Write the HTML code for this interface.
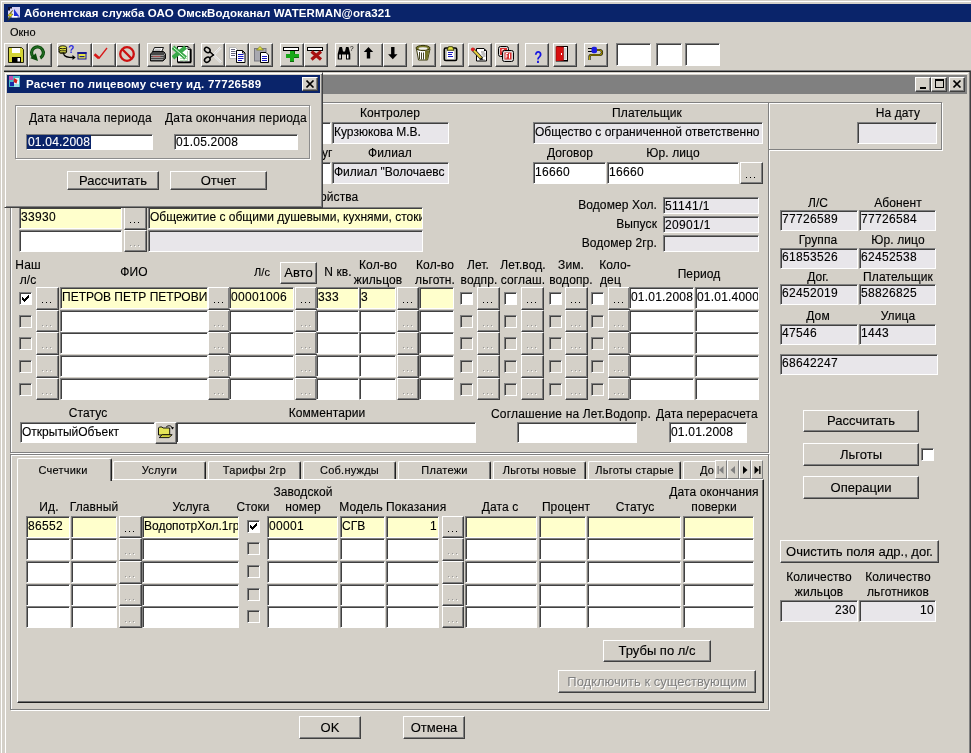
<!DOCTYPE html>
<html><head><meta charset="utf-8"><title>UI</title>
<style>
html,body{margin:0;padding:0}
html{overflow:hidden;width:971px;height:753px;background:#d4d0c8}
body{will-change:transform;width:971px;height:753px;overflow:hidden;background:#d4d0c8;position:relative;font-family:"Liberation Sans",sans-serif;font-size:12px;color:#000;-webkit-text-stroke:0.12px currentColor}
div,i,span{box-sizing:border-box}
.f{position:absolute;border:1px solid;border-color:#808080 #fff #fff #808080;box-shadow:inset 1px 1px 0 #404040;padding:2px 0 0 1px;line-height:14px;white-space:nowrap;overflow:hidden;font-size:12px}
.b{position:absolute;background:#d4d0c8;border:1px solid;border-color:#fff #404040 #404040 #fff;box-shadow:inset -1px -1px 0 #808080;text-align:center;white-space:nowrap;overflow:hidden;font-size:13px}
.b.dis{color:#808080;text-shadow:1px 1px 0 #fff;-webkit-text-stroke:0}
.d{position:absolute;width:1px;height:1px;top:13px}
.l{position:absolute;white-space:nowrap;line-height:16px;height:16px;font-size:12px;letter-spacing:0.1px}
.l.ls{letter-spacing:0.17px}
.c{position:absolute;border:1px solid;border-color:#808080 #fff #fff #808080;box-shadow:inset 1px 1px 0 #404040}
.abs{position:absolute}

.l.s11{font-size:11px}

</style></head>
<body>
<div style="position:absolute;left:0px;top:0px;width:971px;height:1px;background:#d4d0c8"></div>
<div style="position:absolute;left:0px;top:1px;width:971px;height:1px;background:#fff"></div>
<div style="position:absolute;left:0px;top:0px;width:1px;height:753px;background:#d4d0c8"></div>
<div style="position:absolute;left:1px;top:1px;width:1px;height:752px;background:#fff"></div>
<div class="abs" style="left:4px;top:4px;width:967px;height:18px;background:#0a246a"></div>
<div class="abs" style="left:24px;top:4px;height:18px;line-height:18px;color:#fff;-webkit-text-stroke:0;font-weight:bold;font-size:11.5px;white-space:nowrap;letter-spacing:0.12px" id="ttl">Абонентская служба ОАО ОмскВодоканал WATERMAN@ora321</div>
<svg class="abs" style="left:6px;top:5px" width="16" height="16" viewBox="6 5 16 16"><rect x="8" y="7" width="12" height="10.500" fill="#d6d0f2"/><path d="M8 7h4v1.500h-2v2h-2z" fill="#101030"/><path d="M14 9l5.500 7.500h-5.500z" fill="#2030d8"/><path d="M12.800 12.500v4.300h4.700" stroke="#fff" stroke-width="1.600" fill="none"/><path d="M12.300 10.500l-4.800 5.500h2.600l-2.300 4.500 5.200-6.500h-2.600l2.200-3.500z" fill="#f2e61e" stroke="#3a3a00" stroke-width=".5"/></svg>
<div class="abs" style="left:10px;top:25px;font-size:11px;line-height:14px" id="menu">Окно</div>
<div class="b" style="left:4px;top:43px;width:24px;height:24px"><svg class="abs" style="left:0;top:0" width="22" height="22" viewBox="5 44 22 22"><path d="M8.5 47.5h13l2 2v13h-15z" fill="#d4d436" stroke="#101000" stroke-width=".9"/><rect x="12" y="48" width="8" height="5" fill="#fff"/><rect x="12" y="57" width="9" height="5.500" fill="#000"/><rect x="17.500" y="58" width="2.500" height="3.500" fill="#fff"/></svg></div>
<div class="b" style="left:28px;top:43px;width:24px;height:24px"><svg class="abs" style="left:0;top:0" width="22" height="22" viewBox="29 44 22 22"><path d="M40.300 58 A5.900 5.900 0 1 0 33.200 56.900" stroke="#0c4c0c" stroke-width="3.200" fill="none"/><path d="M40.300 58 A5.900 5.900 0 1 0 33.200 56.900" stroke="#2a7a2a" stroke-width="1" fill="none"/><path d="M30.300 58.200L38 61L35.800 53.300Z" fill="#0c4c0c"/></svg></div>
<div class="b" style="left:57px;top:43px;width:35px;height:24px"><svg class="abs" style="left:0;top:0" width="33" height="22" viewBox="58 44 33 22"><path d="M59 47.500v4.500c0 1 1.700 1.600 3.800 1.600s3.800-.6 3.800-1.600v-4.500" fill="#e6e646" stroke="#000" stroke-width=".9"/><ellipse cx="62.800" cy="47.300" rx="3.800" ry="1.500" fill="#e6e646" stroke="#000" stroke-width=".9"/><path d="M59 49.300c0 1 1.700 1.500 3.800 1.500s3.800-.5 3.800-1.500M59 51c0 1 1.700 1.500 3.800 1.500s3.800-.5 3.800-1.500" fill="none" stroke="#000" stroke-width=".8"/><path d="M63.500 53.500c.5 3.500 4 4 10 4" stroke="#000" stroke-width="1.300" fill="none"/><path d="M72.500 55l3.200 2.500-3.200 2.500z" fill="#000"/><text x="68.300" y="53.300" font-family="Liberation Sans" font-weight="bold" font-size="10" fill="#2a2ae0">?</text><rect x="78" y="52.500" width="8" height="6.500" fill="#e6e646" stroke="#1a1a90" stroke-width="1"/><rect x="77.500" y="52" width="9" height="2" fill="#1a1a90"/><rect x="79.500" y="56" width="5" height="1.200" fill="#1a1a90"/></svg></div>
<div class="b" style="left:92px;top:43px;width:24px;height:24px"><svg class="abs" style="left:0;top:0" width="22" height="22" viewBox="93 44 22 22"><path d="M94.500 54.200L99 58.300" stroke="#d81818" stroke-width="2.600" fill="none"/><path d="M98.800 58.500L107 48" stroke="#d81818" stroke-width="1.300" fill="none"/></svg></div>
<div class="b" style="left:116px;top:43px;width:24px;height:24px"><svg class="abs" style="left:0;top:0" width="22" height="22" viewBox="117 44 22 22"><circle cx="127" cy="54" r="6.800" stroke="#cc1010" stroke-width="2.300" fill="none"/><path d="M122.300 49.300l9.400 9.400" stroke="#cc1010" stroke-width="2.300"/></svg></div>
<div class="b" style="left:147px;top:43px;width:24px;height:24px"><svg class="abs" style="left:0;top:0" width="22" height="22" viewBox="148 44 22 22"><path d="M154.500 47.500h9l-2 4.500h-9z" fill="#fff" stroke="#000" stroke-width=".9"/><path d="M155 49.200h6M154.300 50.600h6" stroke="#909090" stroke-width=".7"/><path d="M150.500 54l2.500-2.500h10.500l2 2v5l-2.500 2.500h-12.500z" fill="#484848" stroke="#000" stroke-width=".9"/><path d="M151 55.500h12.500M151 57.500h12.500M151 59.500h12" stroke="#b0b0b0" stroke-width=".8"/><path d="M163.500 55.500l2-2" stroke="#b0b0b0" stroke-width=".8"/><path d="M152.500 56.500h8" stroke="#c05050" stroke-width=".8"/></svg></div>
<div class="b" style="left:171px;top:43px;width:24px;height:24px"><svg class="abs" style="left:0;top:0" width="22" height="22" viewBox="172 44 22 22"><path d="M177.500 46.500h10.500l3 3v12.500h-13.500z" fill="#fff" stroke="#000" stroke-width="1"/><path d="M190.500 49.500v13h-13" stroke="#000" stroke-width="1.600" fill="none"/><path d="M188 46.500v3h3" stroke="#000" stroke-width=".9" fill="none"/><path d="M180 58.500h8M180 60.500h8M184 57v4.500M187.500 51v9" stroke="#b8dcb8" stroke-width="1"/><path d="M174.500 48.500l9.500 8M184 48.500l-9.500 8" stroke="#38a848" stroke-width="4.200" stroke-linecap="square"/><path d="M173.500 47.500l11.500 10" stroke="#e8ffe8" stroke-width="1"/></svg></div>
<div class="b" style="left:201px;top:43px;width:24px;height:24px"><svg class="abs" style="left:0;top:0" width="22" height="22" viewBox="202 44 22 22"><path d="M213 55.500L221 47.300" stroke="#fff" stroke-width="2"/><path d="M213 54.500L221 62.300" stroke="#fff" stroke-width="2"/><path d="M213.500 55L221.300 47" stroke="#909090" stroke-width=".6"/><path d="M213.500 55L221 62.500" stroke="#909090" stroke-width=".6"/><path d="M209.500 51.500L214 55.500M209.500 58L214 54.500" stroke="#000" stroke-width="1.500"/><ellipse cx="207.300" cy="50" rx="3" ry="2.300" fill="none" stroke="#000" stroke-width="1.500" transform="rotate(35 207.300 50)"/><ellipse cx="207.300" cy="59.700" rx="3" ry="2.300" fill="none" stroke="#000" stroke-width="1.500" transform="rotate(-35 207.300 59.700)"/></svg></div>
<div class="b" style="left:225px;top:43px;width:24px;height:24px"><svg class="abs" style="left:0;top:0" width="22" height="22" viewBox="226 44 22 22"><path d="M229.500 47.500h6l2.500 2.500v8.500h-8.500z" fill="#fff" stroke="#a8a8a8" stroke-width=".8"/><path d="M231 49.500h4M231 51.500h4.500M231 53.500h4.500M231 55.500h4" stroke="#606078" stroke-width="1"/><path d="M236.500 50.500h6l2.500 2.500v9.500h-8.500z" fill="#fff" stroke="#000" stroke-width="1"/><path d="M242.500 50.500v2.500h2.500" fill="none" stroke="#000" stroke-width=".9"/><path d="M238 54.500h5.500M238 56.500h5.500M238 58.500h5.500M238 60.500h4" stroke="#1818c0" stroke-width="1"/></svg></div>
<div class="b" style="left:249px;top:43px;width:24px;height:24px"><svg class="abs" style="left:0;top:0" width="22" height="22" viewBox="250 44 22 22"><rect x="254.500" y="48.500" width="11.500" height="12.500" fill="#a8a8b0" stroke="#787880" stroke-width="1"/><path d="M256.500 50l3.500-3.500 3.500 3.500z" fill="#e6e646" stroke="#787820" stroke-width=".8"/><path d="M260.500 52.500h5.500l2.500 2.500v7.500h-8z" fill="#fff" stroke="#000" stroke-width="1"/><path d="M262 56.500h5M262 58.500h5M262 60.500h5" stroke="#1818c0" stroke-width="1"/></svg></div>
<div class="b" style="left:280px;top:43px;width:24px;height:24px"><svg class="abs" style="left:0;top:0" width="22" height="22" viewBox="281 44 22 22" shape-rendering="crispEdges"><rect x="283.500" y="47.500" width="15" height="3" fill="#fff" stroke="#000" stroke-width="1"/><path d="M290 50.500h4v3.500h4.500v3.800h-4.500v3.200h-4v-3.200h-4.500v-3.800h4.500z" fill="#18a818"/><path d="M294 57.800h4.500M290 61h4M294 54v-3.500" stroke="#0c6c0c" stroke-width="1" fill="none"/></svg></div>
<div class="b" style="left:304px;top:43px;width:24px;height:24px"><svg class="abs" style="left:0;top:0" width="22" height="22" viewBox="305 44 22 22"><rect x="307.500" y="47.500" width="15" height="3" fill="#fff" stroke="#000" stroke-width="1" shape-rendering="crispEdges"/><path d="M311.500 51.500l9.500 8M321 51.500l-9.500 8" stroke="#a81010" stroke-width="3.200"/></svg></div>
<div class="b" style="left:335px;top:43px;width:24px;height:24px"><svg class="abs" style="left:0;top:0" width="22" height="22" viewBox="336 44 22 22"><path d="M339.500 47h2.500l1 4.500h2l1-4.500h2.500l1.800 7v5.500h-4.300v-5h-4v5h-4.300v-5.500z" fill="#000"/><rect x="339.300" y="54.500" width="1.500" height="4" fill="#fff"/><rect x="347" y="54.500" width="1.500" height="4" fill="#fff"/><text x="350" y="50.500" font-family="Liberation Sans" font-size="6.500" fill="#000">?</text></svg></div>
<div class="b" style="left:359px;top:43px;width:24px;height:24px"><svg class="abs" style="left:0;top:0" width="22" height="22" viewBox="360 44 22 22"><path d="M368.500 47l4.700 5h-3v6.500h-3.400V52h-3z" fill="#000"/></svg></div>
<div class="b" style="left:383px;top:43px;width:24px;height:24px"><svg class="abs" style="left:0;top:0" width="22" height="22" viewBox="384 44 22 22"><path d="M392.800 59.200l4.700-5h-3V47h-3.400v7.200h-3z" fill="#000"/></svg></div>
<div class="b" style="left:412px;top:43px;width:24px;height:24px"><svg class="abs" style="left:0;top:0" width="22" height="22" viewBox="413 44 22 22"><path d="M416.500 49l2 11h9l2.500-11z" fill="#fff" stroke="#38380c" stroke-width="1"/><path d="M425 51v9h2.500l2-10z" fill="#74742a"/><ellipse cx="423" cy="48" rx="7" ry="2.600" fill="#7c7c2c" stroke="#38380c" stroke-width="1"/><ellipse cx="423" cy="48.500" rx="4.500" ry="1.300" fill="#f0f0f0"/><path d="M419.500 52v7M421.500 52.500v7M423.500 52.500v7" stroke="#303010" stroke-width=".9"/></svg></div>
<div class="b" style="left:440px;top:43px;width:24px;height:24px"><svg class="abs" style="left:0;top:0" width="22" height="22" viewBox="441 44 22 22"><rect x="444.300" y="48" width="12.400" height="12.500" rx="1.500" fill="#c8c8c0" stroke="#000" stroke-width="1.600"/><rect x="447" y="51" width="7" height="8" fill="#fff"/><path d="M448 52.500h5M448 54.500h4M448 56.500h5" stroke="#1818c0" stroke-width="1"/><path d="M447 50.200l1.500-3.500h4l1.500 3.500z" fill="#e6e646" stroke="#303000" stroke-width=".9"/></svg></div>
<div class="b" style="left:468px;top:43px;width:24px;height:24px"><svg class="abs" style="left:0;top:0" width="22" height="22" viewBox="469 44 22 22"><path d="M476.500 48.500h7.500l2.500 2.500v10h-10z" fill="#fff" stroke="#000" stroke-width="1"/><path d="M484 48.500v2.500h2.500" fill="#000"/><path d="M481 52h3.500M481.500 54h4M482.500 56h3M479 60h6" stroke="#606060" stroke-width=".8"/><path d="M473 49.500l9 9.500" stroke="#202020" stroke-width="3.400"/><path d="M473 49.500l8.500 9" stroke="#e6d040" stroke-width="2"/><circle cx="472.800" cy="49.300" r="1.900" fill="#d82020"/><path d="M481 57.300l2.500 2.700-3.500-.8z" fill="#000"/></svg></div>
<div class="b" style="left:495px;top:43px;width:24px;height:24px"><svg class="abs" style="left:0;top:0" width="22" height="22" viewBox="496 44 22 22"><rect x="498.500" y="46.500" width="10" height="10" rx="2" fill="#d8d8d8" stroke="#000" stroke-width="1"/><rect x="500" y="48" width="7" height="7" fill="#d83030"/><rect x="502.500" y="50.500" width="11" height="11" rx="2" fill="#d8d8d8" stroke="#000" stroke-width="1"/><rect x="504.500" y="52.500" width="7" height="7" fill="#d83030"/><path d="M506 58.500v-5h2M506 56h1.500M509.500 53.500v5" stroke="#fff" stroke-width="1" fill="none"/><path d="M502 51.500v-2h2" stroke="#fff" stroke-width=".8" fill="none"/></svg></div>
<div class="b" style="left:525px;top:43px;width:24px;height:24px"><svg class="abs" style="left:0;top:0" width="22" height="22" viewBox="526 44 22 22"><text x="0" y="0" transform="translate(534.300 63) scale(0.82 1)" font-family="Liberation Sans" font-weight="bold" font-size="16" fill="#1414e0">?</text></svg></div>
<div class="b" style="left:553px;top:43px;width:24px;height:24px"><svg class="abs" style="left:0;top:0" width="22" height="22" viewBox="554 44 22 22"><rect x="557.500" y="46.500" width="10" height="14" fill="#fff" stroke="#000" stroke-width="1"/><rect x="564" y="48" width="2.500" height="11.500" fill="#d0d0d0"/><path d="M556 46.500l7.500.5v13.500l-7.500 1z" fill="#d81010" stroke="#800000" stroke-width=".6"/><rect x="561" y="53" width="1" height="2" fill="#fff"/><path d="M556 61.500h12" stroke="#606060" stroke-width="1"/></svg></div>
<div class="b" style="left:584px;top:43px;width:24px;height:24px"><svg class="abs" style="left:0;top:0" width="22" height="22" viewBox="585 44 22 22"><path d="M588 48.500h4M588 51.500h4" stroke="#000" stroke-width="1.100"/><rect x="591.500" y="46.800" width="5.500" height="6.500" rx="2" fill="#1c1ce0"/><path d="M597 50h2.500a2.500 2.500 0 0 1 0 5h-8.500a1.500 1.500 0 0 0-1.500 1.500v3.500" stroke="#181800" stroke-width="2.200" fill="none"/><path d="M597 50h2.500a2.500 2.500 0 0 1 0 5h-8.500a1.500 1.500 0 0 0-1.500 1.500v3.500" stroke="#c8b000" stroke-width=".9" fill="none"/></svg></div>
<div class="f" style="left:616px;top:43px;width:35px;height:23px;background:#fff"></div>
<div class="f" style="left:656px;top:43px;width:26px;height:23px;background:#fff"></div>
<div class="f" style="left:685px;top:43px;width:35px;height:23px;background:#fff"></div>
<div style="position:absolute;left:4px;top:70px;width:967px;height:1px;background:#808080"></div>
<div style="position:absolute;left:4px;top:71px;width:967px;height:1px;background:#202020"></div>
<div style="position:absolute;left:4px;top:72px;width:965px;height:1px;background:#d4d0c8"></div>
<div style="position:absolute;left:5px;top:73px;width:963px;height:1px;background:#fff"></div>
<div style="position:absolute;left:5px;top:73px;width:1px;height:680px;background:#fff"></div>
<div style="position:absolute;left:970px;top:71px;width:1px;height:682px;background:#404040"></div>
<div style="position:absolute;left:969px;top:72px;width:1px;height:681px;background:#808080"></div>
<div class="abs" style="left:7px;top:75px;width:960px;height:19px;background:#808080"></div>
<div class="b" style="left:915px;top:77px;width:16px;height:15px"><i class="abs" style="left:4px;top:9px;width:6px;height:2px;background:#000"></i></div>
<div class="b" style="left:931px;top:77px;width:16px;height:15px"><i class="abs" style="left:3px;top:1px;width:9px;height:9px;border:1px solid #000;border-top:2px solid #000"></i></div>
<div class="b" style="left:949px;top:77px;width:16px;height:15px"><svg class="abs" style="left:3px;top:2px" width="9" height="8" viewBox="0 0 9 8"><path d="M0.5 0.5L7.5 7.5M7.5 0.5L0.5 7.5" stroke="#000" stroke-width="1.6"/></svg></div>
<div style="position:absolute;left:10px;top:102px;width:759px;height:351px;box-sizing:border-box;border:1px solid #808080;box-shadow:1px 1px 0 #fff, inset 1px 1px 0 #fff"></div>
<div style="position:absolute;left:768px;top:102px;width:174px;height:48px;box-sizing:border-box;border:1px solid #808080;box-shadow:1px 1px 0 #fff, inset 1px 1px 0 #fff"></div>
<div style="position:absolute;left:10px;top:454px;width:759px;height:256px;box-sizing:border-box;border:1px solid #808080;box-shadow:1px 1px 0 #fff, inset 1px 1px 0 #fff"></div>
<div class="l " style="left:240px;top:105px;width:300px;text-align:center">Контролер</div>
<div class="f" style="left:301px;top:122px;width:30px;height:22px;background:#fff;text-align:left;"></div>
<div class="f" style="left:332px;top:122px;width:117px;height:22px;background:#e8e6ea;text-align:left;">Курзюкова М.В.</div>
<div class="l " style="left:322px;top:145px;">уг</div>
<div class="l " style="left:240px;top:145px;width:300px;text-align:center">Филиал</div>
<div class="f" style="left:301px;top:162px;width:30px;height:22px;background:#fff;text-align:left;"></div>
<div class="f" style="left:332px;top:162px;width:117px;height:22px;background:#e8e6ea;text-align:left;">Филиал "Волочаевс</div>
<div class="l " style="left:320px;top:189px;">ойства</div>
<div class="l " style="left:497px;top:105px;width:300px;text-align:center">Плательщик</div>
<div class="f" style="left:533px;top:122px;width:230px;height:22px;background:#e8e6ea;text-align:left;">Общество с ограниченной ответственно</div>
<div class="l " style="left:420px;top:145px;width:300px;text-align:center">Договор</div>
<div class="l " style="left:523px;top:145px;width:300px;text-align:center">Юр. лицо</div>
<div class="f" style="left:533px;top:162px;width:73px;height:22px;background:#fff;text-align:left;;letter-spacing:0.33px">16660</div>
<div class="f" style="left:607px;top:162px;width:132px;height:22px;background:#fff;text-align:left;;letter-spacing:0.33px">16660</div>
<div class="b" style="left:740px;top:162px;width:23px;height:22px;"><i class="d" style="background:#000;left:5px;top:14px"></i><i class="d" style="background:#000;left:9px;top:14px"></i><i class="d" style="background:#000;left:13px;top:14px"></i></div>
<div class="l " style="left:748px;top:105px;width:300px;text-align:center">На дату</div>
<div class="f" style="left:857px;top:122px;width:80px;height:22px;background:#e8e6ea;text-align:left;"></div>
<div class="f" style="left:19px;top:207px;width:103px;height:22px;background:#ffffcc;text-align:left;;letter-spacing:0.33px">33930</div>
<div class="b" style="left:124px;top:207px;width:23px;height:23px;"><i class="d" style="background:#000;left:5px;top:14px"></i><i class="d" style="background:#000;left:9px;top:14px"></i><i class="d" style="background:#000;left:13px;top:14px"></i></div>
<div class="f" style="left:148px;top:207px;width:275px;height:22px;background:#ffffcc;text-align:left;">Общежитие с общими душевыми, кухнями, стоки</div>
<div class="f" style="left:19px;top:230px;width:103px;height:22px;background:#fff;text-align:left;"></div>
<div class="b" style="left:124px;top:230px;width:23px;height:22px;"><i class="d" style="background:#9a9a9a;box-shadow:1px 1px 0 #fff;left:5px;top:14px"></i><i class="d" style="background:#9a9a9a;box-shadow:1px 1px 0 #fff;left:9px;top:14px"></i><i class="d" style="background:#9a9a9a;box-shadow:1px 1px 0 #fff;left:13px;top:14px"></i></div>
<div class="f" style="left:148px;top:230px;width:275px;height:22px;background:#e8e6ea;text-align:left;"></div>
<div class="l" style="left:357px;top:197px;width:300px;text-align:right">Водомер Хол.</div>
<div class="f" style="left:663px;top:197px;width:96px;height:17px;background:#e8e6ea;text-align:left;;letter-spacing:0.33px;padding-top:1px">51141/1</div>
<div class="l" style="left:357px;top:216px;width:300px;text-align:right">Выпуск</div>
<div class="f" style="left:663px;top:216px;width:96px;height:17px;background:#e8e6ea;text-align:left;;letter-spacing:0.33px;padding-top:1px">20901/1</div>
<div class="l" style="left:357px;top:235px;width:300px;text-align:right">Водомер 2гр.</div>
<div class="f" style="left:663px;top:235px;width:96px;height:17px;background:#e8e6ea;text-align:left;;padding-top:1px"></div>
<div class="l " style="left:-122px;top:257px;width:300px;text-align:center">Наш</div>
<div class="l " style="left:-122px;top:272px;width:300px;text-align:center">л/с</div>
<div class="l " style="left:-16px;top:264px;width:300px;text-align:center">ФИО</div>
<div class="l s11" style="left:112px;top:264px;width:300px;text-align:center">Л/с</div>
<div class="b " style="left:280px;top:262px;width:37px;height:22px;line-height:20px;">Авто</div>
<div class="l " style="left:188px;top:264px;width:300px;text-align:center">N кв.</div>
<div class="l " style="left:228px;top:257px;width:300px;text-align:center">Кол-во</div>
<div class="l " style="left:228px;top:272px;width:300px;text-align:center">жильцов</div>
<div class="l " style="left:285px;top:257px;width:300px;text-align:center">Кол-во</div>
<div class="l " style="left:285px;top:272px;width:300px;text-align:center">льготн.</div>
<div class="l " style="left:328px;top:257px;width:300px;text-align:center">Лет.</div>
<div class="l " style="left:329px;top:272px;width:300px;text-align:center">водпр.</div>
<div class="l " style="left:373px;top:257px;width:300px;text-align:center">Лет.вод.</div>
<div class="l " style="left:373px;top:272px;width:300px;text-align:center">соглаш.</div>
<div class="l " style="left:421px;top:257px;width:300px;text-align:center">Зим.</div>
<div class="l " style="left:421px;top:272px;width:300px;text-align:center">водопр.</div>
<div class="l " style="left:465px;top:257px;width:300px;text-align:center">Коло-</div>
<div class="l " style="left:600px;top:272px;">дец</div>
<div class="l " style="left:549px;top:266px;width:300px;text-align:center">Период</div>
<div class="c" style="left:19px;top:292px;width:13px;height:13px;background:#fff"><svg width="7" height="7" viewBox="0 0 7 7" shape-rendering="crispEdges" style="position:absolute;left:2px;top:2px" fill="#000"><rect x="6" y="0" width="1" height="1"/><rect x="5" y="1" width="1" height="1"/><rect x="6" y="1" width="1" height="1"/><rect x="0" y="2" width="1" height="1"/><rect x="4" y="2" width="1" height="1"/><rect x="5" y="2" width="1" height="1"/><rect x="6" y="2" width="1" height="1"/><rect x="0" y="3" width="1" height="1"/><rect x="1" y="3" width="1" height="1"/><rect x="3" y="3" width="1" height="1"/><rect x="4" y="3" width="1" height="1"/><rect x="5" y="3" width="1" height="1"/><rect x="0" y="4" width="1" height="1"/><rect x="1" y="4" width="1" height="1"/><rect x="2" y="4" width="1" height="1"/><rect x="3" y="4" width="1" height="1"/><rect x="4" y="4" width="1" height="1"/><rect x="1" y="5" width="1" height="1"/><rect x="2" y="5" width="1" height="1"/><rect x="3" y="5" width="1" height="1"/><rect x="2" y="6" width="1" height="1"/></svg></div>
<div class="b" style="left:36px;top:287px;width:23px;height:23px;"><i class="d" style="background:#000;left:5px;top:14px"></i><i class="d" style="background:#000;left:9px;top:14px"></i><i class="d" style="background:#000;left:13px;top:14px"></i></div>
<div class="f" style="left:60px;top:287px;width:148px;height:22px;background:#ffffcc;text-align:left;">ПЕТРОВ ПЕТР ПЕТРОВИ</div>
<div class="b" style="left:208px;top:287px;width:22px;height:23px;"><i class="d" style="background:#000;left:5px;top:14px"></i><i class="d" style="background:#000;left:9px;top:14px"></i><i class="d" style="background:#000;left:13px;top:14px"></i></div>
<div class="f" style="left:229px;top:287px;width:65px;height:22px;background:#ffffcc;text-align:left;;letter-spacing:0.33px">00001006</div>
<div class="b" style="left:295px;top:287px;width:22px;height:23px;"><i class="d" style="background:#000;left:5px;top:14px"></i><i class="d" style="background:#000;left:9px;top:14px"></i><i class="d" style="background:#000;left:13px;top:14px"></i></div>
<div class="f" style="left:316px;top:287px;width:43px;height:22px;background:#ffffcc;text-align:left;;letter-spacing:0.33px">333</div>
<div class="f" style="left:359px;top:287px;width:37px;height:22px;background:#ffffcc;text-align:left;;letter-spacing:0.33px">3</div>
<div class="b" style="left:397px;top:287px;width:22px;height:23px;"><i class="d" style="background:#000;left:5px;top:14px"></i><i class="d" style="background:#000;left:9px;top:14px"></i><i class="d" style="background:#000;left:13px;top:14px"></i></div>
<div class="f" style="left:419px;top:287px;width:35px;height:22px;background:#ffffcc;text-align:left;"></div>
<div class="c" style="left:460px;top:292px;width:13px;height:13px;background:#fff"></div>
<div class="b" style="left:477px;top:287px;width:23px;height:23px;"><i class="d" style="background:#000;left:5px;top:14px"></i><i class="d" style="background:#000;left:9px;top:14px"></i><i class="d" style="background:#000;left:13px;top:14px"></i></div>
<div class="c" style="left:504px;top:292px;width:13px;height:13px;background:#fff"></div>
<div class="b" style="left:521px;top:287px;width:23px;height:23px;"><i class="d" style="background:#000;left:5px;top:14px"></i><i class="d" style="background:#000;left:9px;top:14px"></i><i class="d" style="background:#000;left:13px;top:14px"></i></div>
<div class="c" style="left:549px;top:292px;width:13px;height:13px;background:#fff"></div>
<div class="b" style="left:565px;top:287px;width:23px;height:23px;"><i class="d" style="background:#000;left:5px;top:14px"></i><i class="d" style="background:#000;left:9px;top:14px"></i><i class="d" style="background:#000;left:13px;top:14px"></i></div>
<div class="c" style="left:591px;top:292px;width:13px;height:13px;background:#fff"></div>
<div class="b" style="left:608px;top:287px;width:22px;height:23px;"><i class="d" style="background:#000;left:5px;top:14px"></i><i class="d" style="background:#000;left:9px;top:14px"></i><i class="d" style="background:#000;left:13px;top:14px"></i></div>
<div class="f" style="left:629px;top:287px;width:65px;height:22px;background:#fff;text-align:left;;letter-spacing:0.2px">01.01.2008</div>
<div class="f" style="left:695px;top:287px;width:64px;height:22px;background:#fff;text-align:left;;letter-spacing:0.2px">01.01.4000</div>
<div class="c" style="left:19px;top:315px;width:13px;height:13px;background:#d4d0c8"></div>
<div class="b" style="left:36px;top:310px;width:23px;height:22px;"><i class="d" style="background:#9a9a9a;box-shadow:1px 1px 0 #fff;left:5px;top:14px"></i><i class="d" style="background:#9a9a9a;box-shadow:1px 1px 0 #fff;left:9px;top:14px"></i><i class="d" style="background:#9a9a9a;box-shadow:1px 1px 0 #fff;left:13px;top:14px"></i></div>
<div class="f" style="left:60px;top:310px;width:148px;height:22px;background:#fff;text-align:left;"></div>
<div class="b" style="left:208px;top:310px;width:22px;height:22px;"><i class="d" style="background:#9a9a9a;box-shadow:1px 1px 0 #fff;left:5px;top:14px"></i><i class="d" style="background:#9a9a9a;box-shadow:1px 1px 0 #fff;left:9px;top:14px"></i><i class="d" style="background:#9a9a9a;box-shadow:1px 1px 0 #fff;left:13px;top:14px"></i></div>
<div class="f" style="left:229px;top:310px;width:65px;height:22px;background:#fff;text-align:left;"></div>
<div class="b" style="left:295px;top:310px;width:22px;height:22px;"><i class="d" style="background:#9a9a9a;box-shadow:1px 1px 0 #fff;left:5px;top:14px"></i><i class="d" style="background:#9a9a9a;box-shadow:1px 1px 0 #fff;left:9px;top:14px"></i><i class="d" style="background:#9a9a9a;box-shadow:1px 1px 0 #fff;left:13px;top:14px"></i></div>
<div class="f" style="left:316px;top:310px;width:43px;height:22px;background:#fff;text-align:left;"></div>
<div class="f" style="left:359px;top:310px;width:37px;height:22px;background:#fff;text-align:left;"></div>
<div class="b" style="left:397px;top:310px;width:22px;height:22px;"><i class="d" style="background:#9a9a9a;box-shadow:1px 1px 0 #fff;left:5px;top:14px"></i><i class="d" style="background:#9a9a9a;box-shadow:1px 1px 0 #fff;left:9px;top:14px"></i><i class="d" style="background:#9a9a9a;box-shadow:1px 1px 0 #fff;left:13px;top:14px"></i></div>
<div class="f" style="left:419px;top:310px;width:35px;height:22px;background:#fff;text-align:left;"></div>
<div class="c" style="left:460px;top:315px;width:13px;height:13px;background:#d4d0c8"></div>
<div class="b" style="left:477px;top:310px;width:23px;height:22px;"><i class="d" style="background:#9a9a9a;box-shadow:1px 1px 0 #fff;left:5px;top:14px"></i><i class="d" style="background:#9a9a9a;box-shadow:1px 1px 0 #fff;left:9px;top:14px"></i><i class="d" style="background:#9a9a9a;box-shadow:1px 1px 0 #fff;left:13px;top:14px"></i></div>
<div class="c" style="left:504px;top:315px;width:13px;height:13px;background:#d4d0c8"></div>
<div class="b" style="left:521px;top:310px;width:23px;height:22px;"><i class="d" style="background:#9a9a9a;box-shadow:1px 1px 0 #fff;left:5px;top:14px"></i><i class="d" style="background:#9a9a9a;box-shadow:1px 1px 0 #fff;left:9px;top:14px"></i><i class="d" style="background:#9a9a9a;box-shadow:1px 1px 0 #fff;left:13px;top:14px"></i></div>
<div class="c" style="left:549px;top:315px;width:13px;height:13px;background:#d4d0c8"></div>
<div class="b" style="left:565px;top:310px;width:23px;height:22px;"><i class="d" style="background:#9a9a9a;box-shadow:1px 1px 0 #fff;left:5px;top:14px"></i><i class="d" style="background:#9a9a9a;box-shadow:1px 1px 0 #fff;left:9px;top:14px"></i><i class="d" style="background:#9a9a9a;box-shadow:1px 1px 0 #fff;left:13px;top:14px"></i></div>
<div class="c" style="left:591px;top:315px;width:13px;height:13px;background:#d4d0c8"></div>
<div class="b" style="left:608px;top:310px;width:22px;height:22px;"><i class="d" style="background:#9a9a9a;box-shadow:1px 1px 0 #fff;left:5px;top:14px"></i><i class="d" style="background:#9a9a9a;box-shadow:1px 1px 0 #fff;left:9px;top:14px"></i><i class="d" style="background:#9a9a9a;box-shadow:1px 1px 0 #fff;left:13px;top:14px"></i></div>
<div class="f" style="left:629px;top:310px;width:65px;height:22px;background:#fff;text-align:left;"></div>
<div class="f" style="left:695px;top:310px;width:64px;height:22px;background:#fff;text-align:left;"></div>
<div class="c" style="left:19px;top:337px;width:13px;height:13px;background:#d4d0c8"></div>
<div class="b" style="left:36px;top:332px;width:23px;height:23px;"><i class="d" style="background:#9a9a9a;box-shadow:1px 1px 0 #fff;left:5px;top:14px"></i><i class="d" style="background:#9a9a9a;box-shadow:1px 1px 0 #fff;left:9px;top:14px"></i><i class="d" style="background:#9a9a9a;box-shadow:1px 1px 0 #fff;left:13px;top:14px"></i></div>
<div class="f" style="left:60px;top:332px;width:148px;height:22px;background:#fff;text-align:left;"></div>
<div class="b" style="left:208px;top:332px;width:22px;height:23px;"><i class="d" style="background:#9a9a9a;box-shadow:1px 1px 0 #fff;left:5px;top:14px"></i><i class="d" style="background:#9a9a9a;box-shadow:1px 1px 0 #fff;left:9px;top:14px"></i><i class="d" style="background:#9a9a9a;box-shadow:1px 1px 0 #fff;left:13px;top:14px"></i></div>
<div class="f" style="left:229px;top:332px;width:65px;height:22px;background:#fff;text-align:left;"></div>
<div class="b" style="left:295px;top:332px;width:22px;height:23px;"><i class="d" style="background:#9a9a9a;box-shadow:1px 1px 0 #fff;left:5px;top:14px"></i><i class="d" style="background:#9a9a9a;box-shadow:1px 1px 0 #fff;left:9px;top:14px"></i><i class="d" style="background:#9a9a9a;box-shadow:1px 1px 0 #fff;left:13px;top:14px"></i></div>
<div class="f" style="left:316px;top:332px;width:43px;height:22px;background:#fff;text-align:left;"></div>
<div class="f" style="left:359px;top:332px;width:37px;height:22px;background:#fff;text-align:left;"></div>
<div class="b" style="left:397px;top:332px;width:22px;height:23px;"><i class="d" style="background:#9a9a9a;box-shadow:1px 1px 0 #fff;left:5px;top:14px"></i><i class="d" style="background:#9a9a9a;box-shadow:1px 1px 0 #fff;left:9px;top:14px"></i><i class="d" style="background:#9a9a9a;box-shadow:1px 1px 0 #fff;left:13px;top:14px"></i></div>
<div class="f" style="left:419px;top:332px;width:35px;height:22px;background:#fff;text-align:left;"></div>
<div class="c" style="left:460px;top:337px;width:13px;height:13px;background:#d4d0c8"></div>
<div class="b" style="left:477px;top:332px;width:23px;height:23px;"><i class="d" style="background:#9a9a9a;box-shadow:1px 1px 0 #fff;left:5px;top:14px"></i><i class="d" style="background:#9a9a9a;box-shadow:1px 1px 0 #fff;left:9px;top:14px"></i><i class="d" style="background:#9a9a9a;box-shadow:1px 1px 0 #fff;left:13px;top:14px"></i></div>
<div class="c" style="left:504px;top:337px;width:13px;height:13px;background:#d4d0c8"></div>
<div class="b" style="left:521px;top:332px;width:23px;height:23px;"><i class="d" style="background:#9a9a9a;box-shadow:1px 1px 0 #fff;left:5px;top:14px"></i><i class="d" style="background:#9a9a9a;box-shadow:1px 1px 0 #fff;left:9px;top:14px"></i><i class="d" style="background:#9a9a9a;box-shadow:1px 1px 0 #fff;left:13px;top:14px"></i></div>
<div class="c" style="left:549px;top:337px;width:13px;height:13px;background:#d4d0c8"></div>
<div class="b" style="left:565px;top:332px;width:23px;height:23px;"><i class="d" style="background:#9a9a9a;box-shadow:1px 1px 0 #fff;left:5px;top:14px"></i><i class="d" style="background:#9a9a9a;box-shadow:1px 1px 0 #fff;left:9px;top:14px"></i><i class="d" style="background:#9a9a9a;box-shadow:1px 1px 0 #fff;left:13px;top:14px"></i></div>
<div class="c" style="left:591px;top:337px;width:13px;height:13px;background:#d4d0c8"></div>
<div class="b" style="left:608px;top:332px;width:22px;height:23px;"><i class="d" style="background:#9a9a9a;box-shadow:1px 1px 0 #fff;left:5px;top:14px"></i><i class="d" style="background:#9a9a9a;box-shadow:1px 1px 0 #fff;left:9px;top:14px"></i><i class="d" style="background:#9a9a9a;box-shadow:1px 1px 0 #fff;left:13px;top:14px"></i></div>
<div class="f" style="left:629px;top:332px;width:65px;height:22px;background:#fff;text-align:left;"></div>
<div class="f" style="left:695px;top:332px;width:64px;height:22px;background:#fff;text-align:left;"></div>
<div class="c" style="left:19px;top:360px;width:13px;height:13px;background:#d4d0c8"></div>
<div class="b" style="left:36px;top:355px;width:23px;height:23px;"><i class="d" style="background:#9a9a9a;box-shadow:1px 1px 0 #fff;left:5px;top:14px"></i><i class="d" style="background:#9a9a9a;box-shadow:1px 1px 0 #fff;left:9px;top:14px"></i><i class="d" style="background:#9a9a9a;box-shadow:1px 1px 0 #fff;left:13px;top:14px"></i></div>
<div class="f" style="left:60px;top:355px;width:148px;height:22px;background:#fff;text-align:left;"></div>
<div class="b" style="left:208px;top:355px;width:22px;height:23px;"><i class="d" style="background:#9a9a9a;box-shadow:1px 1px 0 #fff;left:5px;top:14px"></i><i class="d" style="background:#9a9a9a;box-shadow:1px 1px 0 #fff;left:9px;top:14px"></i><i class="d" style="background:#9a9a9a;box-shadow:1px 1px 0 #fff;left:13px;top:14px"></i></div>
<div class="f" style="left:229px;top:355px;width:65px;height:22px;background:#fff;text-align:left;"></div>
<div class="b" style="left:295px;top:355px;width:22px;height:23px;"><i class="d" style="background:#9a9a9a;box-shadow:1px 1px 0 #fff;left:5px;top:14px"></i><i class="d" style="background:#9a9a9a;box-shadow:1px 1px 0 #fff;left:9px;top:14px"></i><i class="d" style="background:#9a9a9a;box-shadow:1px 1px 0 #fff;left:13px;top:14px"></i></div>
<div class="f" style="left:316px;top:355px;width:43px;height:22px;background:#fff;text-align:left;"></div>
<div class="f" style="left:359px;top:355px;width:37px;height:22px;background:#fff;text-align:left;"></div>
<div class="b" style="left:397px;top:355px;width:22px;height:23px;"><i class="d" style="background:#9a9a9a;box-shadow:1px 1px 0 #fff;left:5px;top:14px"></i><i class="d" style="background:#9a9a9a;box-shadow:1px 1px 0 #fff;left:9px;top:14px"></i><i class="d" style="background:#9a9a9a;box-shadow:1px 1px 0 #fff;left:13px;top:14px"></i></div>
<div class="f" style="left:419px;top:355px;width:35px;height:22px;background:#fff;text-align:left;"></div>
<div class="c" style="left:460px;top:360px;width:13px;height:13px;background:#d4d0c8"></div>
<div class="b" style="left:477px;top:355px;width:23px;height:23px;"><i class="d" style="background:#9a9a9a;box-shadow:1px 1px 0 #fff;left:5px;top:14px"></i><i class="d" style="background:#9a9a9a;box-shadow:1px 1px 0 #fff;left:9px;top:14px"></i><i class="d" style="background:#9a9a9a;box-shadow:1px 1px 0 #fff;left:13px;top:14px"></i></div>
<div class="c" style="left:504px;top:360px;width:13px;height:13px;background:#d4d0c8"></div>
<div class="b" style="left:521px;top:355px;width:23px;height:23px;"><i class="d" style="background:#9a9a9a;box-shadow:1px 1px 0 #fff;left:5px;top:14px"></i><i class="d" style="background:#9a9a9a;box-shadow:1px 1px 0 #fff;left:9px;top:14px"></i><i class="d" style="background:#9a9a9a;box-shadow:1px 1px 0 #fff;left:13px;top:14px"></i></div>
<div class="c" style="left:549px;top:360px;width:13px;height:13px;background:#d4d0c8"></div>
<div class="b" style="left:565px;top:355px;width:23px;height:23px;"><i class="d" style="background:#9a9a9a;box-shadow:1px 1px 0 #fff;left:5px;top:14px"></i><i class="d" style="background:#9a9a9a;box-shadow:1px 1px 0 #fff;left:9px;top:14px"></i><i class="d" style="background:#9a9a9a;box-shadow:1px 1px 0 #fff;left:13px;top:14px"></i></div>
<div class="c" style="left:591px;top:360px;width:13px;height:13px;background:#d4d0c8"></div>
<div class="b" style="left:608px;top:355px;width:22px;height:23px;"><i class="d" style="background:#9a9a9a;box-shadow:1px 1px 0 #fff;left:5px;top:14px"></i><i class="d" style="background:#9a9a9a;box-shadow:1px 1px 0 #fff;left:9px;top:14px"></i><i class="d" style="background:#9a9a9a;box-shadow:1px 1px 0 #fff;left:13px;top:14px"></i></div>
<div class="f" style="left:629px;top:355px;width:65px;height:22px;background:#fff;text-align:left;"></div>
<div class="f" style="left:695px;top:355px;width:64px;height:22px;background:#fff;text-align:left;"></div>
<div class="c" style="left:19px;top:383px;width:13px;height:13px;background:#d4d0c8"></div>
<div class="b" style="left:36px;top:378px;width:23px;height:22px;"><i class="d" style="background:#9a9a9a;box-shadow:1px 1px 0 #fff;left:5px;top:14px"></i><i class="d" style="background:#9a9a9a;box-shadow:1px 1px 0 #fff;left:9px;top:14px"></i><i class="d" style="background:#9a9a9a;box-shadow:1px 1px 0 #fff;left:13px;top:14px"></i></div>
<div class="f" style="left:60px;top:378px;width:148px;height:22px;background:#fff;text-align:left;"></div>
<div class="b" style="left:208px;top:378px;width:22px;height:22px;"><i class="d" style="background:#9a9a9a;box-shadow:1px 1px 0 #fff;left:5px;top:14px"></i><i class="d" style="background:#9a9a9a;box-shadow:1px 1px 0 #fff;left:9px;top:14px"></i><i class="d" style="background:#9a9a9a;box-shadow:1px 1px 0 #fff;left:13px;top:14px"></i></div>
<div class="f" style="left:229px;top:378px;width:65px;height:22px;background:#fff;text-align:left;"></div>
<div class="b" style="left:295px;top:378px;width:22px;height:22px;"><i class="d" style="background:#9a9a9a;box-shadow:1px 1px 0 #fff;left:5px;top:14px"></i><i class="d" style="background:#9a9a9a;box-shadow:1px 1px 0 #fff;left:9px;top:14px"></i><i class="d" style="background:#9a9a9a;box-shadow:1px 1px 0 #fff;left:13px;top:14px"></i></div>
<div class="f" style="left:316px;top:378px;width:43px;height:22px;background:#fff;text-align:left;"></div>
<div class="f" style="left:359px;top:378px;width:37px;height:22px;background:#fff;text-align:left;"></div>
<div class="b" style="left:397px;top:378px;width:22px;height:22px;"><i class="d" style="background:#9a9a9a;box-shadow:1px 1px 0 #fff;left:5px;top:14px"></i><i class="d" style="background:#9a9a9a;box-shadow:1px 1px 0 #fff;left:9px;top:14px"></i><i class="d" style="background:#9a9a9a;box-shadow:1px 1px 0 #fff;left:13px;top:14px"></i></div>
<div class="f" style="left:419px;top:378px;width:35px;height:22px;background:#fff;text-align:left;"></div>
<div class="c" style="left:460px;top:383px;width:13px;height:13px;background:#d4d0c8"></div>
<div class="b" style="left:477px;top:378px;width:23px;height:22px;"><i class="d" style="background:#9a9a9a;box-shadow:1px 1px 0 #fff;left:5px;top:14px"></i><i class="d" style="background:#9a9a9a;box-shadow:1px 1px 0 #fff;left:9px;top:14px"></i><i class="d" style="background:#9a9a9a;box-shadow:1px 1px 0 #fff;left:13px;top:14px"></i></div>
<div class="c" style="left:504px;top:383px;width:13px;height:13px;background:#d4d0c8"></div>
<div class="b" style="left:521px;top:378px;width:23px;height:22px;"><i class="d" style="background:#9a9a9a;box-shadow:1px 1px 0 #fff;left:5px;top:14px"></i><i class="d" style="background:#9a9a9a;box-shadow:1px 1px 0 #fff;left:9px;top:14px"></i><i class="d" style="background:#9a9a9a;box-shadow:1px 1px 0 #fff;left:13px;top:14px"></i></div>
<div class="c" style="left:549px;top:383px;width:13px;height:13px;background:#d4d0c8"></div>
<div class="b" style="left:565px;top:378px;width:23px;height:22px;"><i class="d" style="background:#9a9a9a;box-shadow:1px 1px 0 #fff;left:5px;top:14px"></i><i class="d" style="background:#9a9a9a;box-shadow:1px 1px 0 #fff;left:9px;top:14px"></i><i class="d" style="background:#9a9a9a;box-shadow:1px 1px 0 #fff;left:13px;top:14px"></i></div>
<div class="c" style="left:591px;top:383px;width:13px;height:13px;background:#d4d0c8"></div>
<div class="b" style="left:608px;top:378px;width:22px;height:22px;"><i class="d" style="background:#9a9a9a;box-shadow:1px 1px 0 #fff;left:5px;top:14px"></i><i class="d" style="background:#9a9a9a;box-shadow:1px 1px 0 #fff;left:9px;top:14px"></i><i class="d" style="background:#9a9a9a;box-shadow:1px 1px 0 #fff;left:13px;top:14px"></i></div>
<div class="f" style="left:629px;top:378px;width:65px;height:22px;background:#fff;text-align:left;"></div>
<div class="f" style="left:695px;top:378px;width:64px;height:22px;background:#fff;text-align:left;"></div>
<div class="l " style="left:-62px;top:405px;width:300px;text-align:center">Статус</div>
<div class="l " style="left:177px;top:405px;width:300px;text-align:center">Комментарии</div>
<div class="f" style="left:20px;top:422px;width:135px;height:21px;background:#fff;text-align:left;padding-top:2px">ОткрытыйОбъект</div>
<div class="f" style="left:176px;top:422px;width:300px;height:21px;background:#fff;text-align:left;;padding-top:1px"></div>
<div class="b " style="left:155px;top:422px;width:22px;height:22px;line-height:20px;"><svg class="abs" style="left:0;top:0" width="20" height="20" viewBox="156 422 20 20"><path d="M158.500 434v-7l1-1h2.500l1 1h6.700v7z" fill="#e4e458" stroke="#000" stroke-width=".9"/><path d="M159.200 436.600h9.800l3.200-2.900h-10z" fill="#d2d23c" stroke="#000" stroke-width=".9"/><path d="M166.200 426c1.800-1.800 5.300-1.800 6.300 1.200" fill="none" stroke="#000" stroke-width="1"/><path d="M170.800 426.600l1.900 1.800 1.200-2.300z" fill="#000"/></svg></div>
<div class="l ls" style="left:491px;top:406px;">Соглашение на Лет.Водопр.</div>
<div class="l " style="left:656px;top:406px;">Дата перерасчета</div>
<div class="f" style="left:517px;top:422px;width:120px;height:21px;background:#fff;text-align:left;;padding-top:1px"></div>
<div class="f" style="left:669px;top:422px;width:78px;height:21px;background:#fff;text-align:left;padding-top:2px;letter-spacing:0.2px">01.01.2008</div>
<div class="l " style="left:668px;top:195px;width:300px;text-align:center">Л/С</div>
<div class="l " style="left:748px;top:195px;width:300px;text-align:center">Абонент</div>
<div class="f" style="left:780px;top:210px;width:78px;height:21px;background:#e8e6ea;text-align:left;;letter-spacing:0.33px;padding-top:1px">77726589</div>
<div class="f" style="left:859px;top:210px;width:77px;height:21px;background:#e8e6ea;text-align:left;;letter-spacing:0.33px;padding-top:1px">77726584</div>
<div class="l " style="left:668px;top:232px;width:300px;text-align:center">Группа</div>
<div class="l " style="left:748px;top:232px;width:300px;text-align:center">Юр. лицо</div>
<div class="f" style="left:780px;top:248px;width:78px;height:21px;background:#e8e6ea;text-align:left;;letter-spacing:0.33px;padding-top:1px">61853526</div>
<div class="f" style="left:859px;top:248px;width:77px;height:21px;background:#e8e6ea;text-align:left;;letter-spacing:0.33px;padding-top:1px">62452538</div>
<div class="l " style="left:668px;top:269px;width:300px;text-align:center">Дог.</div>
<div class="l " style="left:748px;top:269px;width:300px;text-align:center">Плательщик</div>
<div class="f" style="left:780px;top:284px;width:78px;height:21px;background:#e8e6ea;text-align:left;;letter-spacing:0.33px;padding-top:1px">62452019</div>
<div class="f" style="left:859px;top:284px;width:77px;height:21px;background:#e8e6ea;text-align:left;;letter-spacing:0.33px;padding-top:1px">58826825</div>
<div class="l " style="left:668px;top:308px;width:300px;text-align:center">Дом</div>
<div class="l " style="left:748px;top:308px;width:300px;text-align:center">Улица</div>
<div class="f" style="left:780px;top:324px;width:78px;height:21px;background:#e8e6ea;text-align:left;;letter-spacing:0.33px;padding-top:1px">47546</div>
<div class="f" style="left:859px;top:324px;width:77px;height:21px;background:#e8e6ea;text-align:left;;letter-spacing:0.33px;padding-top:1px">1443</div>
<div class="f" style="left:780px;top:354px;width:158px;height:21px;background:#e8e6ea;text-align:left;;letter-spacing:0.33px;padding-top:1px">68642247</div>
<div class="b " style="left:803px;top:410px;width:116px;height:22px;line-height:20px;">Рассчитать</div>
<div class="b " style="left:803px;top:443px;width:116px;height:23px;line-height:21px;">Льготы</div>
<div class="c" style="left:921px;top:448px;width:13px;height:13px;background:#fff"></div>
<div class="b " style="left:803px;top:476px;width:116px;height:23px;line-height:21px;">Операции</div>
<div class="b " style="left:780px;top:540px;width:159px;height:23px;line-height:21px;">Очистить поля адр., дог.</div>
<div class="l " style="left:669px;top:569px;width:300px;text-align:center">Количество</div>
<div class="l " style="left:669px;top:584px;width:300px;text-align:center">жильцов</div>
<div class="l " style="left:748px;top:569px;width:300px;text-align:center">Количество</div>
<div class="l " style="left:748px;top:584px;width:300px;text-align:center">льготников</div>
<div class="f" style="left:780px;top:600px;width:78px;height:22px;background:#e8e6ea;text-align:right;padding-right:1px;letter-spacing:0.33px">230</div>
<div class="f" style="left:859px;top:600px;width:77px;height:22px;background:#e8e6ea;text-align:right;padding-right:1px;letter-spacing:0.33px">10</div>
<div class="abs" style="left:17px;top:479px;width:747px;height:224px;border:1px solid;border-color:#fff #202020 #202020 #fff;box-shadow:inset -1px -1px 0 #707070"></div>
<div class="abs" style="left:17px;top:458px;width:95px;height:23px;background:#d4d0c8;border:1px solid;border-color:#fff #202020 transparent #fff;border-bottom:none;box-shadow:inset -1px 0 0 #707070;border-radius:2px 2px 0 0;text-align:center;font-size:11px;letter-spacing:0.25px;line-height:22px;padding-right:3px">Счетчики</div>
<div class="abs" style="left:113px;top:461px;width:93px;height:18px;border:1px solid;border-color:#fff #202020 transparent #fff;border-bottom:none;box-shadow:inset -1px 0 0 #707070;border-radius:2px 2px 0 0;text-align:center;font-size:11px;letter-spacing:0.25px;line-height:17px;overflow:hidden;white-space:nowrap">Услуги</div>
<div class="abs" style="left:208px;top:461px;width:93px;height:18px;border:1px solid;border-color:#fff #202020 transparent #fff;border-bottom:none;box-shadow:inset -1px 0 0 #707070;border-radius:2px 2px 0 0;text-align:center;font-size:11px;letter-spacing:0.25px;line-height:17px;overflow:hidden;white-space:nowrap">Тарифы 2гр</div>
<div class="abs" style="left:303px;top:461px;width:93px;height:18px;border:1px solid;border-color:#fff #202020 transparent #fff;border-bottom:none;box-shadow:inset -1px 0 0 #707070;border-radius:2px 2px 0 0;text-align:center;font-size:11px;letter-spacing:0.25px;line-height:17px;overflow:hidden;white-space:nowrap">Соб.нужды</div>
<div class="abs" style="left:398px;top:461px;width:93px;height:18px;border:1px solid;border-color:#fff #202020 transparent #fff;border-bottom:none;box-shadow:inset -1px 0 0 #707070;border-radius:2px 2px 0 0;text-align:center;font-size:11px;letter-spacing:0.25px;line-height:17px;overflow:hidden;white-space:nowrap">Платежи</div>
<div class="abs" style="left:493px;top:461px;width:93px;height:18px;border:1px solid;border-color:#fff #202020 transparent #fff;border-bottom:none;box-shadow:inset -1px 0 0 #707070;border-radius:2px 2px 0 0;text-align:center;font-size:11px;letter-spacing:0.25px;line-height:17px;overflow:hidden;white-space:nowrap">Льготы новые</div>
<div class="abs" style="left:588px;top:461px;width:93px;height:18px;border:1px solid;border-color:#fff #202020 transparent #fff;border-bottom:none;box-shadow:inset -1px 0 0 #707070;border-radius:2px 2px 0 0;text-align:center;font-size:11px;letter-spacing:0.25px;line-height:17px;overflow:hidden;white-space:nowrap">Льготы старые</div>
<div class="abs" style="left:683px;top:461px;width:33px;height:18px;border-top:1px solid #fff;border-left:1px solid #fff;border-radius:2px 0 0 0;font-size:11px;letter-spacing:0.25px;line-height:17px;overflow:hidden;white-space:nowrap;padding-left:16px">Дог</div>
<div class="abs" style="left:715px;top:460px;width:12px;height:19px;background:#d4d0c8;border:1px solid;border-color:#fff #808080 #808080 #fff"><svg class="abs" style="left:-1px;top:1px" width="12" height="16" viewBox="0 0 12 16"><rect x="2.500" y="4" width="1.300" height="8" fill="#808080"/><path d="M8.500 4v8L4 8z" fill="#808080"/></svg></div>
<div class="abs" style="left:727px;top:460px;width:12px;height:19px;background:#d4d0c8;border:1px solid;border-color:#fff #808080 #808080 #fff"><svg class="abs" style="left:-1px;top:1px" width="12" height="16" viewBox="0 0 12 16"><path d="M8 4v8L3.500 8z" fill="#808080"/></svg></div>
<div class="abs" style="left:739px;top:460px;width:12px;height:19px;background:#d4d0c8;border:1px solid;border-color:#fff #808080 #808080 #fff"><svg class="abs" style="left:-1px;top:1px" width="12" height="16" viewBox="0 0 12 16"><path d="M4 4v8l4.500-4z" fill="#000"/></svg></div>
<div class="abs" style="left:751px;top:460px;width:12px;height:19px;background:#d4d0c8;border:1px solid;border-color:#fff #808080 #808080 #fff"><svg class="abs" style="left:-1px;top:1px" width="12" height="16" viewBox="0 0 12 16"><rect x="8.200" y="4" width="1.300" height="8" fill="#000"/><path d="M3.500 4v8l4.500-4z" fill="#000"/></svg></div>
<div class="l " style="left:-101px;top:499px;width:300px;text-align:center">Ид.</div>
<div class="l " style="left:-56px;top:499px;width:300px;text-align:center">Главный</div>
<div class="l " style="left:41px;top:499px;width:300px;text-align:center">Услуга</div>
<div class="l " style="left:103px;top:499px;width:300px;text-align:center">Стоки</div>
<div class="l " style="left:153px;top:484px;width:300px;text-align:center">Заводской</div>
<div class="l " style="left:153px;top:499px;width:300px;text-align:center">номер</div>
<div class="l " style="left:211px;top:499px;width:300px;text-align:center">Модель</div>
<div class="l " style="left:386px;top:499px;">Показания</div>
<div class="l " style="left:350px;top:499px;width:300px;text-align:center">Дата с</div>
<div class="l " style="left:416px;top:499px;width:300px;text-align:center">Процент</div>
<div class="l " style="left:485px;top:499px;width:300px;text-align:center">Статус</div>
<div class="l " style="left:564px;top:484px;width:300px;text-align:center">Дата окончания</div>
<div class="l " style="left:564px;top:499px;width:300px;text-align:center">поверки</div>
<div class="f" style="left:26px;top:516px;width:44px;height:22px;background:#ffffcc;text-align:left;;letter-spacing:0.33px">86552</div>
<div class="f" style="left:71px;top:516px;width:46px;height:22px;background:#ffffcc;text-align:left;"></div>
<div class="b" style="left:119px;top:516px;width:23px;height:22px;"><i class="d" style="background:#000;left:5px;top:14px"></i><i class="d" style="background:#000;left:9px;top:14px"></i><i class="d" style="background:#000;left:13px;top:14px"></i></div>
<div class="f" style="left:142px;top:516px;width:97px;height:22px;background:#ffffcc;text-align:left;">ВодопотрХол.1гр</div>
<div class="c" style="left:247px;top:520px;width:13px;height:13px;background:#fff"><svg width="7" height="7" viewBox="0 0 7 7" shape-rendering="crispEdges" style="position:absolute;left:2px;top:2px" fill="#000"><rect x="6" y="0" width="1" height="1"/><rect x="5" y="1" width="1" height="1"/><rect x="6" y="1" width="1" height="1"/><rect x="0" y="2" width="1" height="1"/><rect x="4" y="2" width="1" height="1"/><rect x="5" y="2" width="1" height="1"/><rect x="6" y="2" width="1" height="1"/><rect x="0" y="3" width="1" height="1"/><rect x="1" y="3" width="1" height="1"/><rect x="3" y="3" width="1" height="1"/><rect x="4" y="3" width="1" height="1"/><rect x="5" y="3" width="1" height="1"/><rect x="0" y="4" width="1" height="1"/><rect x="1" y="4" width="1" height="1"/><rect x="2" y="4" width="1" height="1"/><rect x="3" y="4" width="1" height="1"/><rect x="4" y="4" width="1" height="1"/><rect x="1" y="5" width="1" height="1"/><rect x="2" y="5" width="1" height="1"/><rect x="3" y="5" width="1" height="1"/><rect x="2" y="6" width="1" height="1"/></svg></div>
<div class="f" style="left:267px;top:516px;width:71px;height:22px;background:#ffffcc;text-align:left;;letter-spacing:0.33px">00001</div>
<div class="f" style="left:340px;top:516px;width:45px;height:22px;background:#ffffcc;text-align:left;">СГВ</div>
<div class="f" style="left:386px;top:516px;width:53px;height:22px;background:#ffffcc;text-align:right;padding-right:1px;letter-spacing:0.33px">1</div>
<div class="b" style="left:442px;top:516px;width:22px;height:22px;"><i class="d" style="background:#000;left:5px;top:14px"></i><i class="d" style="background:#000;left:9px;top:14px"></i><i class="d" style="background:#000;left:13px;top:14px"></i></div>
<div class="f" style="left:465px;top:516px;width:72px;height:22px;background:#ffffcc;text-align:left;"></div>
<div class="f" style="left:539px;top:516px;width:47px;height:22px;background:#ffffcc;text-align:left;"></div>
<div class="f" style="left:587px;top:516px;width:94px;height:22px;background:#ffffcc;text-align:left;"></div>
<div class="f" style="left:683px;top:516px;width:71px;height:22px;background:#ffffcc;text-align:left;"></div>
<div class="f" style="left:26px;top:538px;width:44px;height:22px;background:#fff;text-align:left;"></div>
<div class="f" style="left:71px;top:538px;width:46px;height:22px;background:#fff;text-align:left;"></div>
<div class="b" style="left:119px;top:538px;width:23px;height:23px;"><i class="d" style="background:#9a9a9a;box-shadow:1px 1px 0 #fff;left:5px;top:14px"></i><i class="d" style="background:#9a9a9a;box-shadow:1px 1px 0 #fff;left:9px;top:14px"></i><i class="d" style="background:#9a9a9a;box-shadow:1px 1px 0 #fff;left:13px;top:14px"></i></div>
<div class="f" style="left:142px;top:538px;width:97px;height:22px;background:#fff;text-align:left;"></div>
<div class="c" style="left:247px;top:542px;width:13px;height:13px;background:#d4d0c8"></div>
<div class="f" style="left:267px;top:538px;width:71px;height:22px;background:#fff;text-align:left;"></div>
<div class="f" style="left:340px;top:538px;width:45px;height:22px;background:#fff;text-align:left;"></div>
<div class="f" style="left:386px;top:538px;width:53px;height:22px;background:#fff;text-align:right;padding-right:1px"></div>
<div class="b" style="left:442px;top:538px;width:22px;height:23px;"><i class="d" style="background:#9a9a9a;box-shadow:1px 1px 0 #fff;left:5px;top:14px"></i><i class="d" style="background:#9a9a9a;box-shadow:1px 1px 0 #fff;left:9px;top:14px"></i><i class="d" style="background:#9a9a9a;box-shadow:1px 1px 0 #fff;left:13px;top:14px"></i></div>
<div class="f" style="left:465px;top:538px;width:72px;height:22px;background:#fff;text-align:left;"></div>
<div class="f" style="left:539px;top:538px;width:47px;height:22px;background:#fff;text-align:left;"></div>
<div class="f" style="left:587px;top:538px;width:94px;height:22px;background:#fff;text-align:left;"></div>
<div class="f" style="left:683px;top:538px;width:71px;height:22px;background:#fff;text-align:left;"></div>
<div class="f" style="left:26px;top:561px;width:44px;height:22px;background:#fff;text-align:left;"></div>
<div class="f" style="left:71px;top:561px;width:46px;height:22px;background:#fff;text-align:left;"></div>
<div class="b" style="left:119px;top:561px;width:23px;height:23px;"><i class="d" style="background:#9a9a9a;box-shadow:1px 1px 0 #fff;left:5px;top:14px"></i><i class="d" style="background:#9a9a9a;box-shadow:1px 1px 0 #fff;left:9px;top:14px"></i><i class="d" style="background:#9a9a9a;box-shadow:1px 1px 0 #fff;left:13px;top:14px"></i></div>
<div class="f" style="left:142px;top:561px;width:97px;height:22px;background:#fff;text-align:left;"></div>
<div class="c" style="left:247px;top:565px;width:13px;height:13px;background:#d4d0c8"></div>
<div class="f" style="left:267px;top:561px;width:71px;height:22px;background:#fff;text-align:left;"></div>
<div class="f" style="left:340px;top:561px;width:45px;height:22px;background:#fff;text-align:left;"></div>
<div class="f" style="left:386px;top:561px;width:53px;height:22px;background:#fff;text-align:right;padding-right:1px"></div>
<div class="b" style="left:442px;top:561px;width:22px;height:23px;"><i class="d" style="background:#9a9a9a;box-shadow:1px 1px 0 #fff;left:5px;top:14px"></i><i class="d" style="background:#9a9a9a;box-shadow:1px 1px 0 #fff;left:9px;top:14px"></i><i class="d" style="background:#9a9a9a;box-shadow:1px 1px 0 #fff;left:13px;top:14px"></i></div>
<div class="f" style="left:465px;top:561px;width:72px;height:22px;background:#fff;text-align:left;"></div>
<div class="f" style="left:539px;top:561px;width:47px;height:22px;background:#fff;text-align:left;"></div>
<div class="f" style="left:587px;top:561px;width:94px;height:22px;background:#fff;text-align:left;"></div>
<div class="f" style="left:683px;top:561px;width:71px;height:22px;background:#fff;text-align:left;"></div>
<div class="f" style="left:26px;top:584px;width:44px;height:22px;background:#fff;text-align:left;"></div>
<div class="f" style="left:71px;top:584px;width:46px;height:22px;background:#fff;text-align:left;"></div>
<div class="b" style="left:119px;top:584px;width:23px;height:22px;"><i class="d" style="background:#9a9a9a;box-shadow:1px 1px 0 #fff;left:5px;top:14px"></i><i class="d" style="background:#9a9a9a;box-shadow:1px 1px 0 #fff;left:9px;top:14px"></i><i class="d" style="background:#9a9a9a;box-shadow:1px 1px 0 #fff;left:13px;top:14px"></i></div>
<div class="f" style="left:142px;top:584px;width:97px;height:22px;background:#fff;text-align:left;"></div>
<div class="c" style="left:247px;top:588px;width:13px;height:13px;background:#d4d0c8"></div>
<div class="f" style="left:267px;top:584px;width:71px;height:22px;background:#fff;text-align:left;"></div>
<div class="f" style="left:340px;top:584px;width:45px;height:22px;background:#fff;text-align:left;"></div>
<div class="f" style="left:386px;top:584px;width:53px;height:22px;background:#fff;text-align:right;padding-right:1px"></div>
<div class="b" style="left:442px;top:584px;width:22px;height:22px;"><i class="d" style="background:#9a9a9a;box-shadow:1px 1px 0 #fff;left:5px;top:14px"></i><i class="d" style="background:#9a9a9a;box-shadow:1px 1px 0 #fff;left:9px;top:14px"></i><i class="d" style="background:#9a9a9a;box-shadow:1px 1px 0 #fff;left:13px;top:14px"></i></div>
<div class="f" style="left:465px;top:584px;width:72px;height:22px;background:#fff;text-align:left;"></div>
<div class="f" style="left:539px;top:584px;width:47px;height:22px;background:#fff;text-align:left;"></div>
<div class="f" style="left:587px;top:584px;width:94px;height:22px;background:#fff;text-align:left;"></div>
<div class="f" style="left:683px;top:584px;width:71px;height:22px;background:#fff;text-align:left;"></div>
<div class="f" style="left:26px;top:606px;width:44px;height:22px;background:#fff;text-align:left;"></div>
<div class="f" style="left:71px;top:606px;width:46px;height:22px;background:#fff;text-align:left;"></div>
<div class="b" style="left:119px;top:606px;width:23px;height:22px;"><i class="d" style="background:#9a9a9a;box-shadow:1px 1px 0 #fff;left:5px;top:14px"></i><i class="d" style="background:#9a9a9a;box-shadow:1px 1px 0 #fff;left:9px;top:14px"></i><i class="d" style="background:#9a9a9a;box-shadow:1px 1px 0 #fff;left:13px;top:14px"></i></div>
<div class="f" style="left:142px;top:606px;width:97px;height:22px;background:#fff;text-align:left;"></div>
<div class="c" style="left:247px;top:610px;width:13px;height:13px;background:#d4d0c8"></div>
<div class="f" style="left:267px;top:606px;width:71px;height:22px;background:#fff;text-align:left;"></div>
<div class="f" style="left:340px;top:606px;width:45px;height:22px;background:#fff;text-align:left;"></div>
<div class="f" style="left:386px;top:606px;width:53px;height:22px;background:#fff;text-align:right;padding-right:1px"></div>
<div class="b" style="left:442px;top:606px;width:22px;height:22px;"><i class="d" style="background:#9a9a9a;box-shadow:1px 1px 0 #fff;left:5px;top:14px"></i><i class="d" style="background:#9a9a9a;box-shadow:1px 1px 0 #fff;left:9px;top:14px"></i><i class="d" style="background:#9a9a9a;box-shadow:1px 1px 0 #fff;left:13px;top:14px"></i></div>
<div class="f" style="left:465px;top:606px;width:72px;height:22px;background:#fff;text-align:left;"></div>
<div class="f" style="left:539px;top:606px;width:47px;height:22px;background:#fff;text-align:left;"></div>
<div class="f" style="left:587px;top:606px;width:94px;height:22px;background:#fff;text-align:left;"></div>
<div class="f" style="left:683px;top:606px;width:71px;height:22px;background:#fff;text-align:left;"></div>
<div class="b " style="left:603px;top:640px;width:108px;height:22px;line-height:20px;">Трубы по л/с</div>
<div class="b dis" style="left:558px;top:670px;width:198px;height:23px;line-height:21px;">Подключить к существующим</div>
<div class="b " style="left:299px;top:716px;width:62px;height:23px;line-height:21px;">OK</div>
<div class="b " style="left:403px;top:716px;width:62px;height:23px;line-height:21px;">Отмена</div>
<div class="abs" style="left:4px;top:72px;width:319px;height:136px;background:#d4d0c8;border:1px solid;border-color:#d4d0c8 #404040 #404040 #d4d0c8;box-shadow:inset 1px 1px 0 #fff, inset -1px -1px 0 #808080"></div>
<div class="abs" style="left:7px;top:75px;width:313px;height:18px;background:#0a246a"></div>
<div class="abs" style="left:26px;top:75px;height:18px;line-height:18px;color:#fff;-webkit-text-stroke:0;font-weight:bold;font-size:11.5px;white-space:nowrap;letter-spacing:0.28px" id="dttl">Расчет по лицевому счету ид. 77726589</div>
<svg class="abs" style="left:9px;top:76px" width="12" height="12" viewBox="0 0 12 12"><rect x="0" y="0" width="11" height="11" fill="#48b8c8"/><rect x="0" y="0" width="4" height="4" fill="#c050b0"/><rect x="1" y="6" width="4" height="4" fill="#1828a8"/><rect x="5" y="2" width="5" height="6" fill="#e8f4f8"/><path d="M5 2l3.500 2-1 3.500-3-1.500z" fill="#d02020"/><rect x="5" y="8" width="5" height="3" fill="#a0e0e8"/></svg>
<div class="b" style="left:302px;top:77px;width:16px;height:14px"><svg class="abs" style="left:3px;top:2px" width="9" height="8" viewBox="0 0 9 8"><path d="M0.5 0.5L7.5 7.5M7.5 0.500L0.500 7.500" stroke="#000" stroke-width="1.600"/></svg></div>
<div style="position:absolute;left:15px;top:105px;width:295px;height:54px;box-sizing:border-box;border:1px solid #8c8c8c;box-shadow:1px 1px 0 #fff, inset 1px 1px 0 #fff"></div>
<div class="l ls" style="left:29px;top:110px;">Дата начала периода</div>
<div class="l ls" style="left:165px;top:110px;">Дата окончания периода</div>
<div class="f" style="left:26px;top:134px;width:127px;height:16px;background:#fff;text-align:left;padding:0 0 0 1px;line-height:14px"><span style="background:#0a246a;color:#fff;display:inline-block;height:14px;letter-spacing:0.2px;padding:0 1px 0 1px;margin-left:-1px">01.04.2008</span></div>
<div class="f" style="left:174px;top:134px;width:124px;height:16px;background:#fff;text-align:left;padding:0 0 0 1px;line-height:14px;letter-spacing:0.2px">01.05.2008</div>
<div class="b " style="left:67px;top:171px;width:92px;height:19px;line-height:17px;">Рассчитать</div>
<div class="b " style="left:170px;top:171px;width:97px;height:19px;line-height:17px;">Отчет</div>
</body></html>
